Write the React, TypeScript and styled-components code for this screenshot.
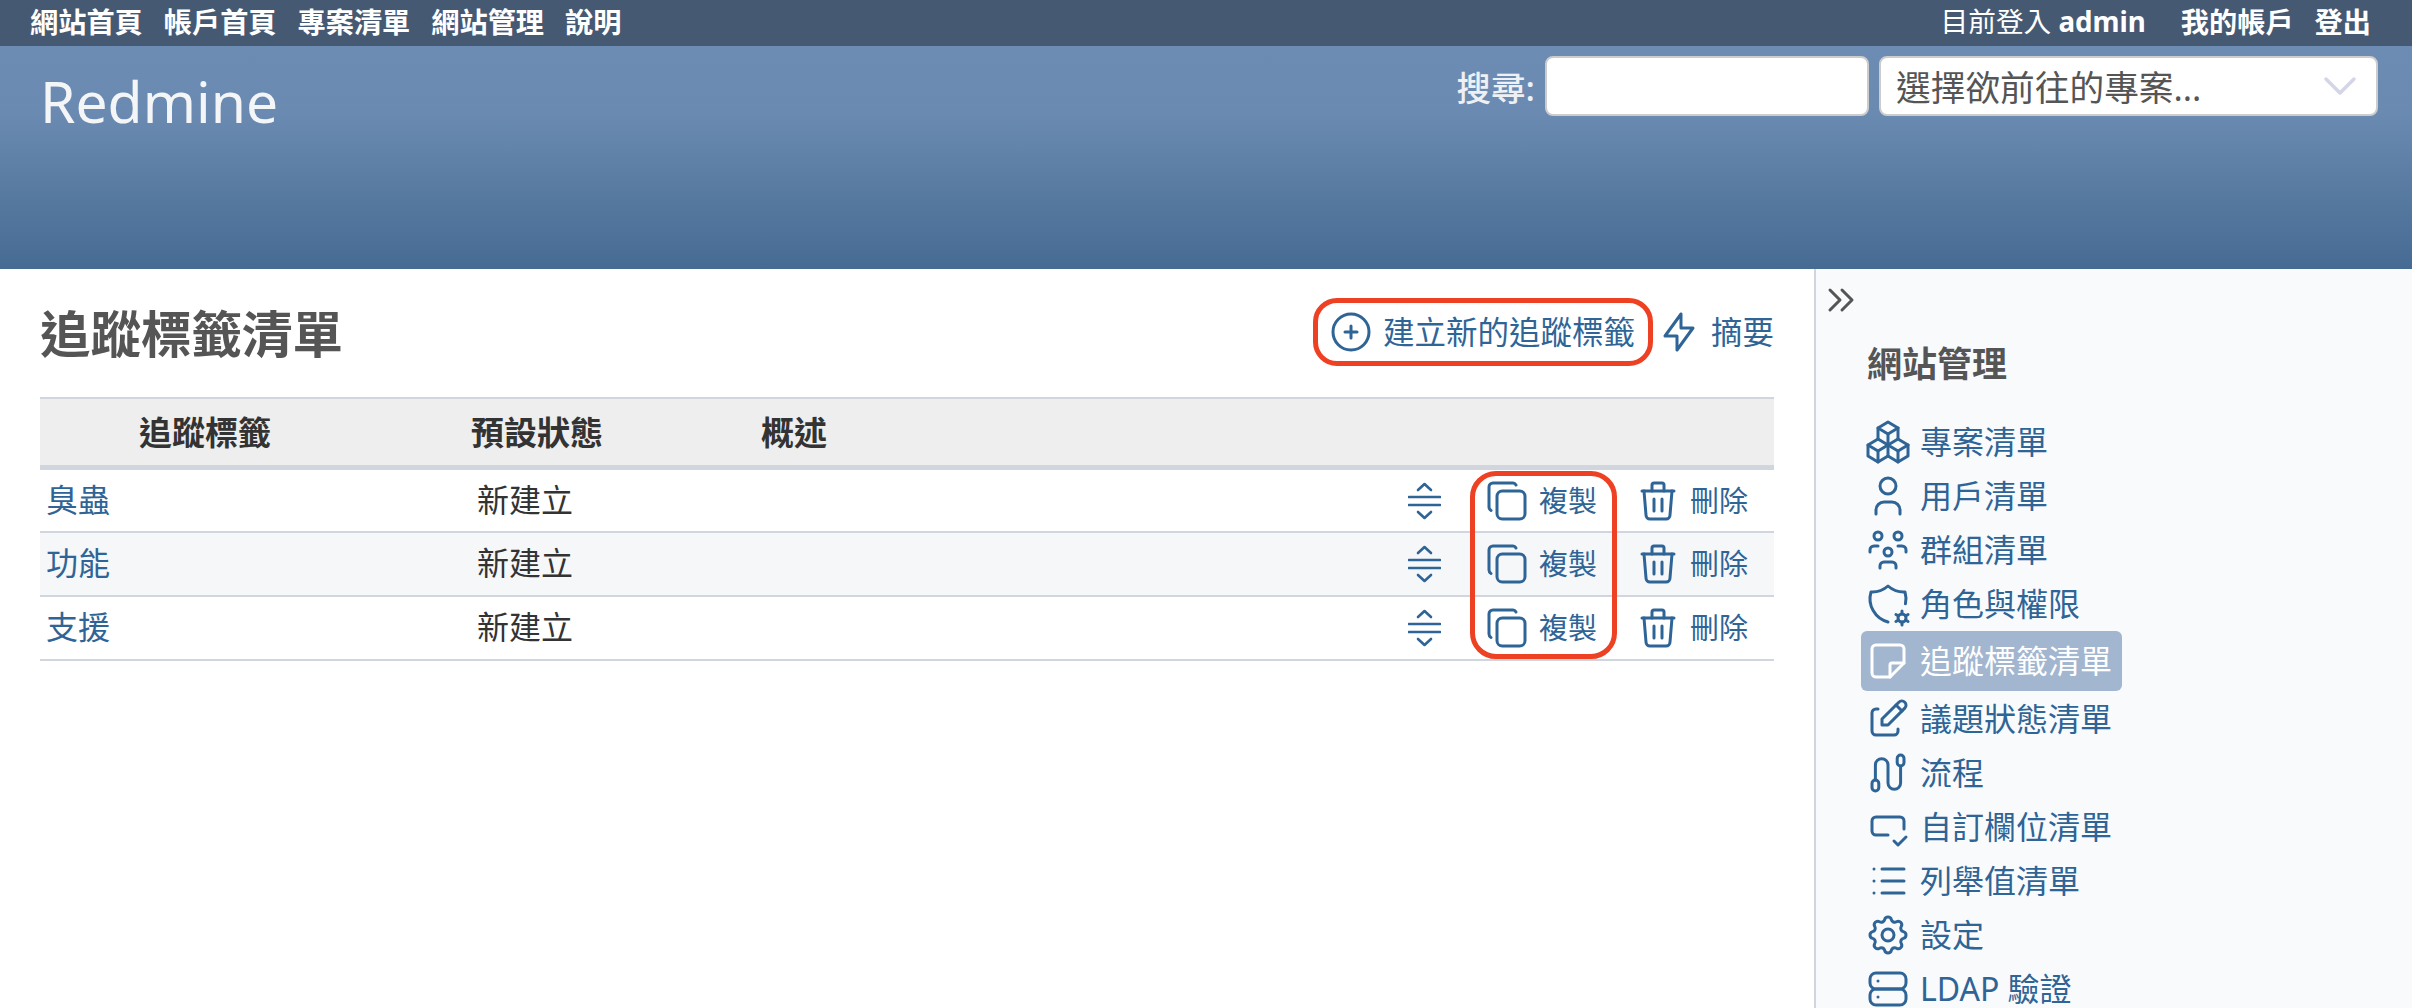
import React from "react";
import styled, { createGlobalStyle } from "styled-components";
import {
  TbCirclePlus, TbBolt, TbCopy, TbTrash, TbPackages, TbUser, TbUsersGroup, TbShieldCog,
  TbNote, TbEdit, TbInputCheck, TbList, TbSettings, TbServer, TbChevronsRight, TbChevronDown,
} from "react-icons/tb";

const FONT = `"Noto Sans", "Noto Sans CJK TC", sans-serif`;
const LINK = "#2f6496";

const Global = createGlobalStyle`
  html, body { margin: 0; padding: 0; height: 100%; overflow: hidden; background: #fff; }
  body { font-family: ${FONT}; }
  * { box-sizing: border-box; }
`;

const Page = styled.div`
  width: 2412px;
  height: 1008px;
  display: flex;
  flex-direction: column;
  overflow: hidden;
`;

const TopMenu = styled.nav`
  height: 46px;
  flex: none;
  background: #455973;
  color: #fff;
  display: flex;
  align-items: center;
  justify-content: space-between;
  padding: 0 41px 2px 30px;
  font-size: 28.2px;
  line-height: 1;
`;

const TopGroup = styled.div`
  display: flex;
  gap: 21px;
  white-space: pre;
`;

const TopItem = styled.span<{ $light?: boolean }>`
  font-weight: ${(p) => (p.$light ? 400 : 700)};
  font-size: ${(p) => (p.$light ? "27.7px" : "inherit")};
  margin-right: ${(p) => (p.$light ? "14px" : 0)};
  b { font-weight: 700; }
`;

const Header = styled.header`
  height: 223px;
  flex: none;
  background: linear-gradient(180deg, #6d8cb4 0%, #6a8ab1 30%, #466b92 100%);
  display: flex;
  justify-content: space-between;
  align-items: flex-start;
  padding: 10px 34px 0 40px;
`;

const Brand = styled.h1`
  margin: 6px 0 0;
  font-size: 57px;
  line-height: 78px;
  font-weight: 400;
  color: #f4f5f7;
`;

const Search = styled.form`
  display: flex;
  align-items: center;
  gap: 10px;
`;

const SearchLabel = styled.label`
  font-size: 34.5px;
  font-weight: 500;
  color: #eef0f3;
`;

const SearchInput = styled.div`
  width: 324px;
  height: 60px;
  background: #fff;
  border: 2px solid #ccc;
  border-radius: 8px;
`;

const ProjectJump = styled.div`
  width: 499px;
  height: 60px;
  background: #fff;
  border: 2px solid #ccc;
  border-radius: 8px;
  display: flex;
  align-items: center;
  justify-content: space-between;
  padding: 0 8px 0 15px;
  font-size: 34.7px;
  color: #555;
  svg { color: #d4d5e6; }
`;

const Body = styled.div`
  flex: 1;
  display: flex;
  min-height: 0;
`;

const Content = styled.main`
  width: 1814px;
  flex: none;
  padding: 0 40px;
`;

const TitleRow = styled.div`
  height: 128px;
  display: flex;
  justify-content: space-between;
  align-items: flex-start;
`;

const Title = styled.h2`
  margin: 30px 0 0;
  font-size: 50.5px;
  line-height: 70px;
  font-weight: 700;
  color: #555;
`;

const Contextual = styled.div`
  display: flex;
  align-items: center;
  margin-top: 39px;
  gap: 20px;
`;

const IconLink = styled.a<{ $size: number }>`
  position: relative;
  display: inline-flex;
  align-items: center;
  gap: 8px;
  color: ${LINK};
  font-size: ${(p) => p.$size}px;
  line-height: 48px;
  white-space: nowrap;
`;

const CalloutInline = styled.span`
  position: absolute;
  left: -14px;
  right: -18px;
  top: -10px;
  bottom: -10px;
  border: 5px solid #ee4023;
  border-radius: 24px;
  pointer-events: none;
`;

const Table = styled.div`
  border-top: 2px solid #d1d5dd;
`;

const HeadRow = styled.div`
  display: grid;
  grid-template-columns: 431px 290px 1fr;
  height: 71px;
  align-items: center;
  background: #eeeeee;
  border-bottom: 5px solid #d1d5dd;
  font-size: 33px;
  font-weight: 700;
  color: #333;
  padding-bottom: 2px;
`;

const HeadCell = styled.div<{ $indent?: number }>`
  padding-left: ${(p) => p.$indent ?? 0}px;
`;

const Rows = styled.div`
  position: relative;
`;

const Row = styled.div<{ $alt?: boolean }>`
  display: grid;
  grid-template-columns: 431px 290px 1fr;
  height: 64px;
  align-items: center;
  background: ${(p) => (p.$alt ? "#f6f7f9" : "#fff")};
  border-bottom: 2px solid #d1d5dd;
  font-size: 32px;
  color: #333;
  &:first-child { height: 63px; }
`;

const NameCell = styled.a`
  padding: 0 0 6px 6px;
  color: ${LINK};
`;

const StatusCell = styled.div`
  padding: 0 0 6px 6px;
`;

const Actions = styled.div`
  display: flex;
  justify-content: flex-end;
  align-items: center;
  gap: 37px;
  padding-right: 26px;
  color: ${LINK};
`;

const SortIcon = styled.svg`
  width: 33px;
  height: 38px;
  margin-right: 5px;
  color: ${LINK};
`;

const CalloutColumn = styled.div`
  position: absolute;
  top: 1px;
  right: 157px;
  width: 147px;
  height: 188px;
  border: 5px solid #ee4023;
  border-radius: 26px;
  pointer-events: none;
`;

const Sidebar = styled.aside`
  flex: 1;
  background: #f9fafc;
  border-left: 2px solid #d1d5dd;
  padding-top: 7px;
`;

const Toggle = styled.div`
  height: 48px;
  color: #555;
  line-height: 0;
`;

const SideTitle = styled.h3`
  margin: 16px 0 0 51px;
  font-size: 35px;
  line-height: 48px;
  font-weight: 700;
  color: #555;
`;

const SideList = styled.ul`
  list-style: none;
  margin: 27px 0 0 45px;
  padding: 0;
`;

const SideItem = styled.li<{ $active?: boolean }>`
  display: flex;
  width: fit-content;
  align-items: center;
  gap: 8px;
  height: ${(p) => (p.$active ? 60 : 54)}px;
  margin-bottom: ${(p) => (p.$active ? 1 : 0)}px;
  padding: 0 10px 0 3px;
  border-radius: 6px;
  font-size: 32px;
  line-height: 36px;
  white-space: nowrap;
  color: ${(p) => (p.$active ? "#fff" : LINK)};
  background: ${(p) => (p.$active ? "#a2b6d0" : "transparent")};
`;

const ICON = { size: 48, strokeWidth: 1.5 };

const FlowIcon = () => (
  <svg width="48" height="48" viewBox="0 0 24 24" fill="none" stroke="currentColor" strokeWidth="1.5" strokeLinecap="round" strokeLinejoin="round">
    <rect x="4" y="15.5" width="3.4" height="5.5" rx="1.7" />
    <rect x="16.6" y="3" width="3.4" height="5.5" rx="1.7" />
    <path d="M5.7 15.5V8a3.15 3.15 0 0 1 6.3 0V17a3.15 3.15 0 0 0 6.3 0V8.5" />
  </svg>
);

const Sort = () => (
  <SortIcon viewBox="0 0 33 38" fill="none" stroke="currentColor" strokeWidth="2.6" strokeLinecap="round" strokeLinejoin="round">
    <path d="M10 8l6.5 -6l6.5 6" />
    <path d="M1 15h31" />
    <path d="M1 23h31" />
    <path d="M10 30l6.5 6l6.5 -6" />
  </SortIcon>
);

const sideItems: { label: string; icon: React.ReactNode; active?: boolean }[] = [
  { label: "專案清單", icon: <TbPackages {...ICON} /> },
  { label: "用戶清單", icon: <TbUser {...ICON} /> },
  { label: "群組清單", icon: <TbUsersGroup {...ICON} /> },
  { label: "角色與權限", icon: <TbShieldCog {...ICON} /> },
  { label: "追蹤標籤清單", icon: <TbNote {...ICON} />, active: true },
  { label: "議題狀態清單", icon: <TbEdit {...ICON} /> },
  { label: "流程", icon: <FlowIcon /> },
  { label: "自訂欄位清單", icon: <TbInputCheck {...ICON} /> },
  { label: "列舉值清單", icon: <TbList {...ICON} /> },
  { label: "設定", icon: <TbSettings {...ICON} /> },
  { label: "LDAP 驗證", icon: <TbServer {...ICON} /> },
];

const trackers = ["臭蟲", "功能", "支援"];

export default function App() {
  return (
    <Page>
      <Global />
      <TopMenu>
        <TopGroup>
          {["網站首頁", "帳戶首頁", "專案清單", "網站管理", "說明"].map((t) => (
            <TopItem key={t}>{t}</TopItem>
          ))}
        </TopGroup>
        <TopGroup>
          <TopItem $light>
            目前登入 <b>admin</b>
          </TopItem>
          <TopItem>我的帳戶</TopItem>
          <TopItem>登出</TopItem>
        </TopGroup>
      </TopMenu>
      <Header>
        <Brand>Redmine</Brand>
        <Search>
          <SearchLabel>搜尋:</SearchLabel>
          <SearchInput />
          <ProjectJump>
            選擇欲前往的專案...
            <TbChevronDown size={56} strokeWidth={1.5} />
          </ProjectJump>
        </Search>
      </Header>
      <Body>
        <Content>
          <TitleRow>
            <Title>追蹤標籤清單</Title>
            <Contextual>
              <IconLink $size={31.5}>
                <TbCirclePlus {...ICON} />
                建立新的追蹤標籤
                <CalloutInline />
              </IconLink>
              <IconLink $size={31.5}>
                <TbBolt {...ICON} />
                摘要
              </IconLink>
            </Contextual>
          </TitleRow>
          <Table>
            <HeadRow>
              <HeadCell $indent={99}>追蹤標籤</HeadCell>
              <HeadCell>預設狀態</HeadCell>
              <HeadCell>概述</HeadCell>
            </HeadRow>
            <Rows>
              {trackers.map((name, i) => (
                <Row key={name} $alt={i === 1}>
                  <NameCell>{name}</NameCell>
                  <StatusCell>新建立</StatusCell>
                  <Actions>
                    <Sort />
                    <IconLink $size={29}>
                      <TbCopy {...ICON} />
                      複製
                    </IconLink>
                    <IconLink $size={29}>
                      <TbTrash {...ICON} />
                      刪除
                    </IconLink>
                  </Actions>
                </Row>
              ))}
              <CalloutColumn />
            </Rows>
          </Table>
        </Content>
        <Sidebar>
          <Toggle>
            <TbChevronsRight {...ICON} />
          </Toggle>
          <SideTitle>網站管理</SideTitle>
          <SideList>
            {sideItems.map((item) => (
              <SideItem key={item.label} $active={item.active}>
                {item.icon}
                {item.label}
              </SideItem>
            ))}
          </SideList>
        </Sidebar>
      </Body>
    </Page>
  );
}
